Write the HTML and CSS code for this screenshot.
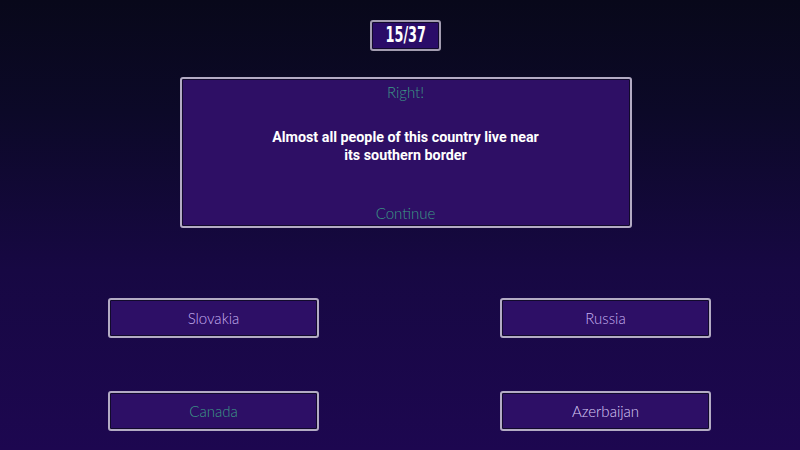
FILE: index.html
```html
<!DOCTYPE html>
<html>
<head>
<meta charset="UTF-8">
<title>Geo Quiz</title>
<link rel="stylesheet" href="styles.css">
</head>
<body>
  <div class="screen">
    <div class="counter"><span>15/37</span></div>

    <div class="card question">
      <div class="verdict">Right!</div>
      <p class="clue">Almost all people of this country live near<br>its southern border</p>
      <div class="next">Continue</div>
    </div>

    <div class="answers">
      <div class="card answer">Slovakia</div>
      <div class="card answer">Russia</div>
      <div class="card answer correct">Canada</div>
      <div class="card answer picked">Azerbaijan</div>
    </div>
  </div>
</body>
</html>
```

FILE: styles.css
```css
html, body {
  margin: 0px;
  padding: 0px;
  width: 100%;
  height: 100%;
}

body {
  background: linear-gradient(to bottom, #08081a 0%, #0c0928 25%, #170843 60%, #1d0750 100%);
  font-family: Lato, "Open Sans", sans-serif;
  overflow: hidden;
}

.screen {
  display: flex;
  flex-direction: column;
  align-items: center;
  padding-top: 20px;
  padding-left: 11px;
}

/* shared frame: light outline, thin dark line, purple fill */
.card {
  box-sizing: border-box;
  background: #2d0f66;
  border: 2px solid #b3abc4;
  border-radius: 3px;
  box-shadow: inset 0 0 0 1px #120a2c;
}

.counter {
  box-sizing: border-box;
  width: 71px;
  height: 31px;
  background: #2a0c68;
  border: 2px solid #a29cb0;
  border-radius: 3px;
  box-shadow: inset 0 0 0 1px #120a2c;
  color: #ffffff;
  font-family: "DejaVu Sans Condensed", "DejaVu Sans", sans-serif;
  font-weight: bold;
  font-size: 21px;
  line-height: 27px;
  text-align: center;
}

/* squeeze the digits into a tall, narrow look */
.counter span {
  display: inline-block;
  transform: scaleX(0.68);
}

.question {
  width: 452px;
  height: 151px;
  margin-top: 26px;
  display: flex;
  flex-direction: column;
  align-items: center;
  padding: 4px 0 4px 0;
  background: #2e0f65;
}

.verdict {
  color: #3c9a86;
  font-weight: 300;
  font-size: 15px;
  line-height: 18px;
}

.clue {
  flex: 1;
  margin: 0;
  padding-top: 27px;
  color: #ffffff;
  font-family: Roboto, sans-serif;
  font-weight: bold;
  font-size: 14.3px;
  line-height: 18px;
  text-align: center;
}

.next {
  color: #3c9a86;
  font-weight: 300;
  font-size: 15px;
  line-height: 18px;
}

.answers {
  align-self: stretch;
  display: grid;
  grid-template-columns: 211px 211px;
  column-gap: 181px;
  row-gap: 53px;
  padding-left: 97px;
  margin-top: 70px;
}

.answer {
  height: 40px;
  color: #c5aef0;
  font-weight: 300;
  font-size: 15px;
  line-height: 36px;
  text-align: center;
}

.answer.correct {
  color: #3c9a86;
}

.answer.picked {
  color: #d9cbf6;
}
```
